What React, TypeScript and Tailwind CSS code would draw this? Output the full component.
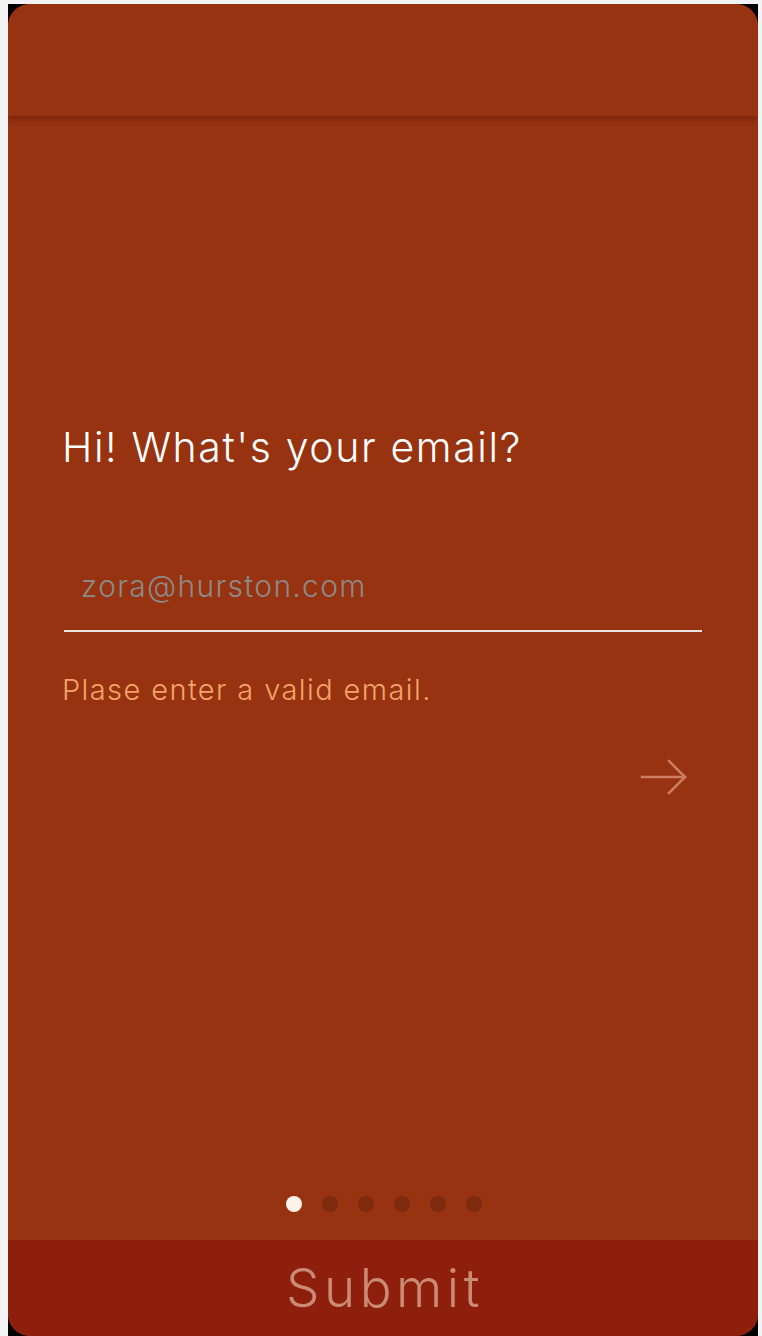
import React from "react";

export default function App() {
  const font = { fontFamily: "Inter, 'Noto Sans', sans-serif" };
  return (
    <div className="w-[762px] h-[1336px] bg-[#f3f3f3] pl-[8px] pt-[4px] pr-[4px] overflow-hidden" style={font}>
      <div className="w-[750px] h-[1332px] bg-black">
        <div className="w-[750px] h-[1332px] rounded-[22px] bg-[#973310] flex flex-col overflow-hidden">
          <div className="h-[112px] shrink-0 bg-[#973310] relative z-10 shadow-[0_3px_6px_rgba(60,10,0,0.35)]" />
          <div className="flex-1 flex flex-col px-[54px]">
            <h1 className="mt-[307px] text-[41px] leading-[48px] font-light tracking-[1.6px] text-white">
              Hi! What's your email?
            </h1>
            <div className="mt-[98px] ml-[2px] mr-[2px] border-b-2 border-[#ece4e0] pb-[27px] pl-[17px]">
              <span className="text-[30px] leading-[34px] font-light tracking-[1.3px] text-[#8c8a88]">zora@hurston.com</span>
            </div>
            <p className="mt-[41px] text-[29px] leading-[34px] font-light tracking-[1.4px] text-[#f3a468]">
              Plase enter a valid email.
            </p>
            <div className="flex justify-end mt-[52px] pr-[16px]">
              <svg width="48" height="36" viewBox="0 0 48 36" fill="none" stroke="#cd7e62" strokeWidth="2.5" strokeLinecap="square">
                <line x1="2" y1="18" x2="45" y2="18" />
                <polyline points="29,2 45,18 29,34" />
              </svg>
            </div>
            <div className="flex-1" />
            <div className="flex justify-center gap-[20px] pb-[28px] pl-[2px]">
              <span className="w-[16px] h-[16px] rounded-full bg-[#fdf3ea]" />
              <span className="w-[16px] h-[16px] rounded-full bg-[#7e2a0e]" />
              <span className="w-[16px] h-[16px] rounded-full bg-[#7e2a0e]" />
              <span className="w-[16px] h-[16px] rounded-full bg-[#7e2a0e]" />
              <span className="w-[16px] h-[16px] rounded-full bg-[#7e2a0e]" />
              <span className="w-[16px] h-[16px] rounded-full bg-[#7e2a0e]" />
            </div>
          </div>
          <div className="h-[96px] shrink-0 bg-[#8e1f0c] flex items-center justify-center">
            <span className="text-[53px] leading-[60px] font-light tracking-[4.5px] pl-[4px] text-[#c98a76]">Submit</span>
          </div>
        </div>
      </div>
    </div>
  );
}
